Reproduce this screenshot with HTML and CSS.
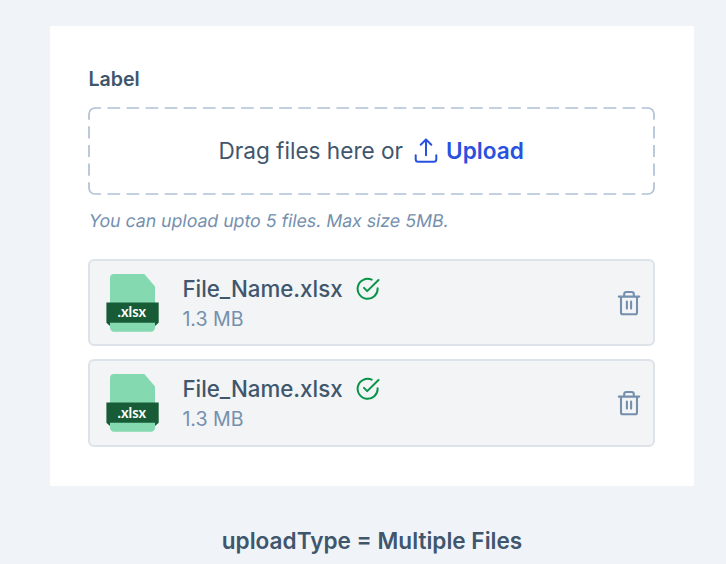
FILE: index.html
```html
<!DOCTYPE html>
<html lang="en">
<head>
<meta charset="utf-8">
<title>File upload</title>
<link rel="stylesheet" href="styles.css">
</head>
<body>
<main class="card">
  <div class="label">Label</div>
  <div class="dropzone">
    <svg class="outline" viewBox="0 0 567 88">
      <path d="M13.1 1H7A6 6 0 0 0 1 7V12.8M553.9 1H560A6 6 0 0 1 566 7V12.8M13.1 87H7A6 6 0 0 1 1 81V75.2M553.9 87H560A6 6 0 0 0 566 81V75.2"/>
      <path class="dash-x" d="M13.1 1H553.9M13.1 87H553.9"/>
      <path class="dash-y" d="M1 12.8V75.2M566 12.8V75.2"/>
    </svg>
    <span class="prompt">Drag files here or</span>
    <svg class="upload-icon" viewBox="0 0 24 26"><path d="M12 17.2V1.8M6.7 6.8 12 1.5 17.3 6.8M1.7 17.3V21.2Q1.7 23.7 4.2 23.7H19.8Q22.3 23.7 22.3 21.2V17.3"/></svg>
    <span class="upload">Upload</span>
  </div>
  <div class="hint">You can upload upto 5 files. Max size 5MB.</div>
  <div class="files">
    <div class="file">
      <div class="file-icon">
        <svg viewBox="0 0 54 60"><path d="M8 1H38.3L49 13.5V54.5A4 4 0 0 1 45 58.7H8A4 4 0 0 1 4 54.5V5A4 4 0 0 1 8 1Z" fill="#84d9b1"/><path d="M.4 29.6H52.7V49.8L49 53V49.8H4V53L.4 49.8Z" fill="#185c37"/></svg>
        <span class="ext">.xlsx</span>
      </div>
      <div class="info">
        <div class="name"><span>File_Name.xlsx</span><svg class="done" viewBox="0 0 24 24"><path d="M15.7 2.7A10 10 0 1 0 21.6 11.2M22.5 3 11.2 14.1 8 10.9"/></svg></div>
        <div class="size">1.3 MB</div>
      </div>
      <svg class="trash" viewBox="0 0 24 26"><path d="M1.8 6.6H22.2M4 6.6V22.4Q4 24.2 5.8 24.2H18.2Q20 24.2 20 22.4V6.6M7.2 6.3V4.2Q7.2 2 9.4 2H14.6Q16.8 2 16.8 4.2V6.3M9.9 11.5V18.6M14.1 11.5V18.6"/></svg>
    </div>
    <div class="file">
      <div class="file-icon">
        <svg viewBox="0 0 54 60"><path d="M8 1H38.3L49 13.5V54.5A4 4 0 0 1 45 58.7H8A4 4 0 0 1 4 54.5V5A4 4 0 0 1 8 1Z" fill="#84d9b1"/><path d="M.4 29.6H52.7V49.8L49 53V49.8H4V53L.4 49.8Z" fill="#185c37"/></svg>
        <span class="ext">.xlsx</span>
      </div>
      <div class="info">
        <div class="name"><span>File_Name.xlsx</span><svg class="done" viewBox="0 0 24 24"><path d="M15.7 2.7A10 10 0 1 0 21.6 11.2M22.5 3 11.2 14.1 8 10.9"/></svg></div>
        <div class="size">1.3 MB</div>
      </div>
      <svg class="trash" viewBox="0 0 24 26"><path d="M1.8 6.6H22.2M4 6.6V22.4Q4 24.2 5.8 24.2H18.2Q20 24.2 20 22.4V6.6M7.2 6.3V4.2Q7.2 2 9.4 2H14.6Q16.8 2 16.8 4.2V6.3M9.9 11.5V18.6M14.1 11.5V18.6"/></svg>
    </div>
  </div>
</main>
<div class="caption">uploadType = Multiple Files</div>
</body>
</html>
```
FILE: styles.css
```css
* { box-sizing: border-box; }
body {
  margin: 0;
  height: 564px;
  padding: 26px 32px 0 50px;
  overflow: hidden;
  background: #f0f4f9;
  color: #40566d;
  font-family: Inter, "Liberation Sans", sans-serif;
}
svg { display: block; flex: none; fill: none; }
.card {
  height: 460px;
  padding: 40px 38.4px 0;
  background: #fff;
}
.label { height: 26px; line-height: 27px; font-size: 19.6px; font-weight: 600; }
.dropzone {
  position: relative;
  display: flex;
  align-items: center;
  width: 567px;
  height: 88px;
  margin-top: 14.7px;
  padding-left: 130px;
  line-height: 32px;
  font-size: 22.6px;
}
.outline {
  position: absolute;
  inset: 0;
  width: 567px;
  height: 88px;
  overflow: visible;
  stroke: #b0c1d5;
  stroke-width: 1.7;
}
.dash-x { stroke-dasharray: 12.72 6.36; stroke-dashoffset: 12.72; }
.dash-y { stroke-dasharray: 12.2 6.45; stroke-dashoffset: 12.2; }
.upload-icon {
  width: 24px;
  height: 26px;
  margin: 0 8px 0 11px;
  stroke: #2951e0;
  stroke-width: 2;
  stroke-linecap: round;
  stroke-linejoin: round;
}
.upload { color: #2951e0; font-weight: 600; }
.hint {
  width: max-content;
  height: 26px;
  margin: 13px 0 0 .6px;
  line-height: 26px;
  font-size: 17.7px;
  color: #7590ad;
  transform: skewX(-9.4deg);
}
.files { display: grid; gap: 12.8px; margin-top: 25.3px; }
.file {
  display: flex;
  align-items: center;
  width: 567px;
  height: 87.5px;
  padding: 0 12px 0 15.5px;
  border: 2px solid #dde3ea;
  border-radius: 6px;
  background: #f2f4f6;
}
.file-icon { display: grid; width: 54px; height: 60px; }
.file-icon > * { grid-area: 1 / 1; }
.ext {
  margin: 29.5px 2px 0 0;
  height: 20px;
  text-align: center;
  font: 700 14.5px/20px "Lato", sans-serif;
  color: #fff;
}
.info { flex: 1; margin-left: 22.5px; }
.name {
  display: flex;
  align-items: center;
  gap: 13px;
  height: 32px;
  line-height: 32px;
  font-size: 22.3px;
  font-weight: 500;
}
.done {
  width: 24px;
  height: 24px;
  stroke: #079447;
  stroke-width: 2;
  stroke-linecap: round;
  stroke-linejoin: round;
}
.size { height: 28px; line-height: 28px; font-size: 19.6px; color: #7590ad; }
.trash {
  width: 24px;
  height: 26px;
  stroke: #7590ad;
  stroke-width: 2.1;
  stroke-linecap: round;
}
.caption {
  margin-top: 39px;
  text-align: center;
  line-height: 32px;
  font-size: 22.6px;
  font-weight: 600;
}
```
